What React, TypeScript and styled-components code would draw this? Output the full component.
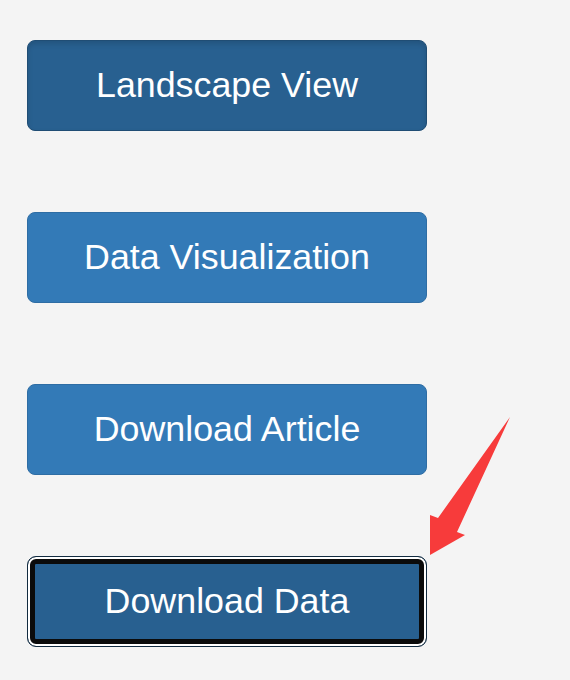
import styled, { createGlobalStyle, css } from "styled-components";

const GlobalStyle = createGlobalStyle`
    html, body {
        margin: 0;
        padding: 0;
        background: #f4f4f4;
        font-family: "Liberation Sans", Arial, sans-serif;
    }
`;

const Page = styled.div`
    position: relative;
    width: 570px;
    height: 680px;
    box-sizing: border-box;
    padding: 40px 0 0 27px;
`;

const ButtonList = styled.div`
    display: flex;
    flex-direction: column;
    gap: 81px;
`;

type Variant = "active" | "normal" | "focus";

const ActionButton = styled.button<{ $variant: Variant }>`
    width: 400px;
    height: 91px;
    box-sizing: border-box;
    display: flex;
    align-items: center;
    justify-content: center;
    padding: 0;
    font-family: "Liberation Sans", Arial, sans-serif;
    font-size: 35.8px;
    color: #fff;
    border-radius: 8px;
    cursor: pointer;
    background: #337ab7;
    border: 1px solid #2e6da4;

    ${(p) =>
        p.$variant === "active" &&
        css`
            background: #286090;
            border-color: #204d74;
            box-shadow: inset 0 3px 5px rgba(0, 0, 0, 0.125);
        `}

    ${(p) =>
        p.$variant === "focus" &&
        css`
            background: #286090;
            border-color: #122b40;
            border-radius: 9px;
            box-shadow: inset 0 0 0 2px #fff, inset 0 0 0 7px #0b0b0b;
        `}
`;

const Arrow = styled.svg`
    position: absolute;
    left: 0;
    top: 0;
    pointer-events: none;
`;

const buttons: { label: string; variant: Variant }[] = [
    { label: "Landscape View", variant: "active" },
    { label: "Data Visualization", variant: "normal" },
    { label: "Download Article", variant: "normal" },
    { label: "Download Data", variant: "focus" },
];

export default function App() {
    return (
        <>
            <GlobalStyle />
            <Page>
                <ButtonList>
                    {buttons.map((b) => (
                        <ActionButton key={b.label} $variant={b.variant}>
                            {b.label}
                        </ActionButton>
                    ))}
                </ButtonList>
                <Arrow width="570" height="680" viewBox="0 0 570 680">
                    <polygon
                        points="510,417 457,532 465,535 430,555 430,515 438,518"
                        fill="#f73b3b"
                    />
                </Arrow>
            </Page>
        </>
    );
}
